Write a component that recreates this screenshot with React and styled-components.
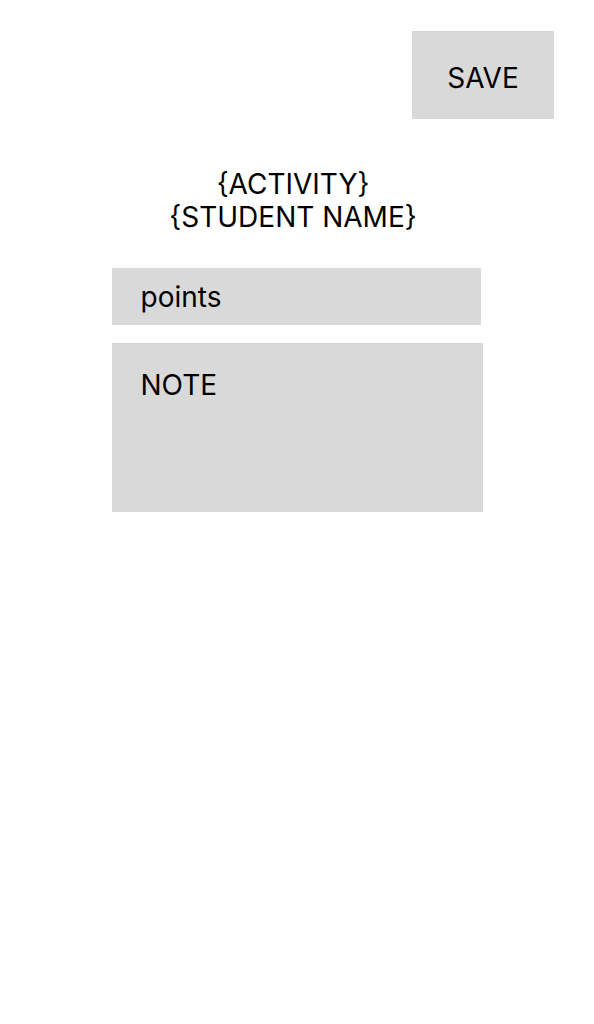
import React, { useState } from "react";
import styled, { createGlobalStyle } from "styled-components";

const GlobalStyle = createGlobalStyle`
  body {
    margin: 0;
    background: #ffffff;
    font-family: Inter, "Noto Sans", sans-serif;
    color: #000000;
  }
`;

function App() {
  const [points, setpoints] = useState("");
  const [note, setnote] = useState("");
  return (
    <Page>
      <GlobalStyle />
      <TopBar>
        <SaveButton>SAVE</SaveButton>
      </TopBar>
      <Form>
        <Title>
          {"{ACTIVITY}"}
          <br />
          {"{STUDENT NAME}"}
        </Title>
        <PointsInput
          placeholder="points"
          value={points}
          onChange={(e) => setpoints(e.target.value)}
        />
        <NoteArea
          placeholder="NOTE"
          value={note}
          onChange={(e) => setnote(e.target.value)}
        />
      </Form>
    </Page>
  );
}

export default App;

const Page = styled.div`
  width: 594px;
  min-height: 1024px;
  display: flex;
  flex-direction: column;
  padding-top: 31px;
  box-sizing: border-box;
`;

const TopBar = styled.div`
  display: flex;
  justify-content: flex-end;
  padding-right: 40px;
`;

const SaveButton = styled.button`
  width: 142px;
  height: 88px;
  border: none;
  background: #d9d9d9;
  font-family: Inter, sans-serif;
  font-size: 28px;
  color: #000;
  cursor: pointer;
  padding: 6px 0 0;
`;

const Form = styled.div`
  width: 371px;
  margin: 0 auto;
  display: flex;
  flex-direction: column;
`;

const Title = styled.h1`
  margin: 49px 0 0;
  font-size: 28px;
  font-weight: 400;
  line-height: 33px;
  text-align: center;
  padding-right: 8px;
`;

const PointsInput = styled.input`
  margin-top: 34px;
  width: 369px;
  height: 57px;
  box-sizing: border-box;
  border: none;
  outline: none;
  background: #d9d9d9;
  padding: 0 29px;
  font-family: Inter, sans-serif;
  font-size: 28px;
  color: #000;
  &::placeholder {
    color: #000;
  }
`;

const NoteArea = styled.textarea`
  margin-top: 18px;
  width: 371px;
  height: 169px;
  box-sizing: border-box;
  border: none;
  outline: none;
  resize: none;
  background: #d9d9d9;
  padding: 26px 29px;
  font-family: Inter, sans-serif;
  font-size: 28px;
  line-height: 33px;
  color: #000;
  &::placeholder {
    color: #000;
  }
`;
